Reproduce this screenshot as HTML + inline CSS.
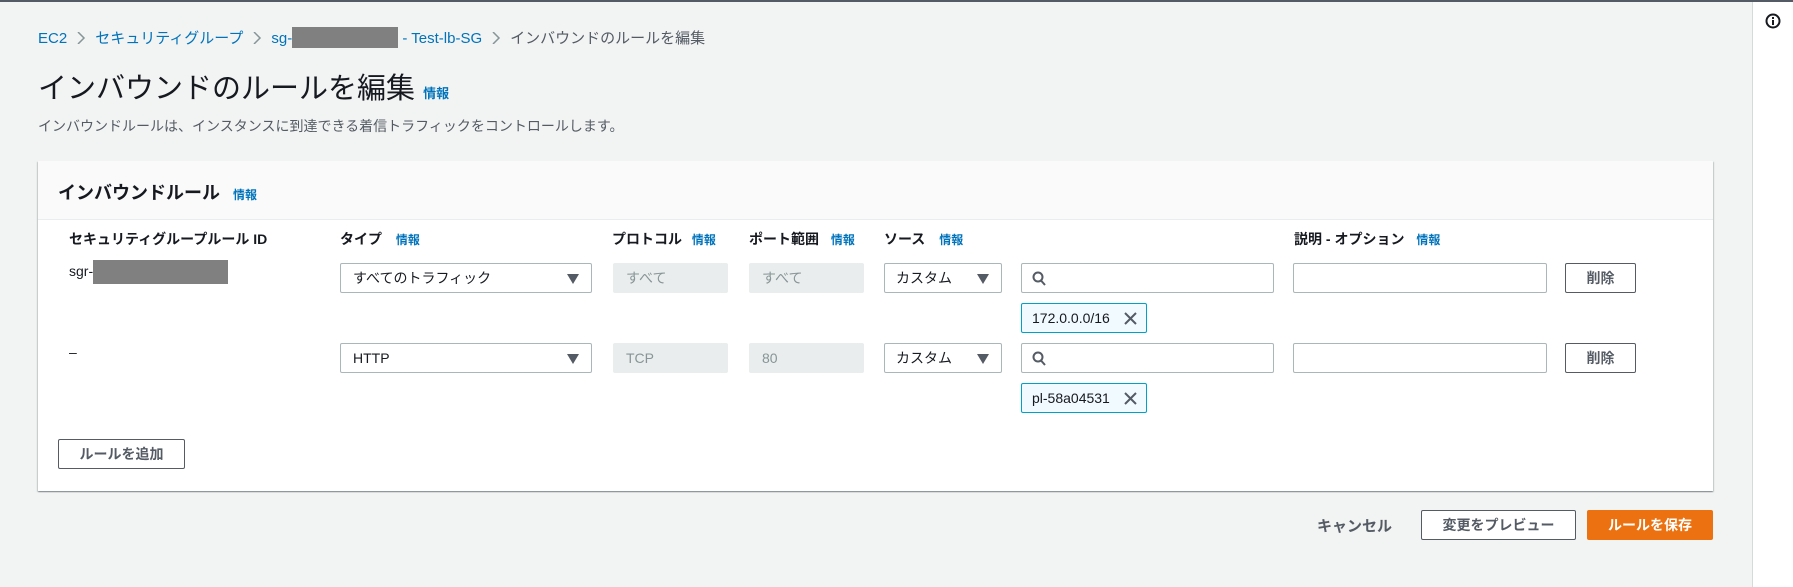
<!DOCTYPE html>
<html><head><meta charset="utf-8"><style>
*{box-sizing:border-box;margin:0;padding:0}
body{width:1793px;height:587px;background:#f2f3f3;font-family:"Liberation Sans","Noto Sans CJK JP",sans-serif;color:#16191f;position:relative;overflow:hidden;font-size:14px}
.a{position:absolute}
.top{left:0;top:0;width:1793px;height:2px;background:#545b64}
.side{left:1752px;top:2px;width:41px;height:585px;background:#fff;border-left:1px solid #d5dbdb}
.lnk{color:#0073bb}
.info{color:#0073bb;font-size:12px;font-weight:bold}
.panel{left:38px;top:161px;width:1675px;height:330px;background:#fff;box-shadow:0 1px 1px rgba(0,28,36,.3),1px 1px 1px rgba(0,28,36,.15),-1px 1px 1px rgba(0,28,36,.15)}
.ph{left:0;top:0;width:1675px;height:59px;background:#fafafa;border-bottom:1px solid #eaeded}
.inp{height:30px;border:1px solid #aab7b8;border-radius:2px;background:#fff;font-size:14px;line-height:28px;padding-left:12px}
.dis{background:#eaeded;border-color:#eaeded;color:#879596}
.hd{font-weight:bold;font-size:14px;top:229px}
.btn{height:30px;border:1px solid #545b64;border-radius:2px;background:#fff;font-weight:bold;font-size:14px;line-height:28px;text-align:center;color:#545b64}
.tag{height:30px;border:1px solid #00a1c9;border-radius:2px;background:#f1faff;font-size:14px;line-height:28px;padding-left:10px}
.arr{position:absolute;right:12px;top:10px;width:0;height:0;border-left:6px solid transparent;border-right:6px solid transparent;border-top:10px solid #545b64}
.red{background:#808080}
.sep{display:inline-block;width:16px;height:12px;margin:0 6px;vertical-align:-1px}
</style></head><body>
<div class="a top"></div>
<div class="a side"><svg class="a" style="left:12px;top:11px" width="16" height="16" viewBox="0 0 16 16"><circle cx="8" cy="8" r="6.5" fill="none" stroke="#16191f" stroke-width="2"/><rect x="7" y="7" width="2" height="5" fill="#16191f"/><rect x="7" y="4" width="2" height="2" fill="#16191f"/></svg></div>

<div class="a" style="left:38px;top:27px;font-size:15px;white-space:nowrap">
<span class="lnk">EC2</span><svg class="sep" viewBox="0 0 16 12"><path d="M5 0L11 6L5 12" fill="none" stroke="#879596" stroke-width="1.5"/></svg><span class="lnk">セキュリティグループ</span><svg class="sep" viewBox="0 0 16 12"><path d="M5 0L11 6L5 12" fill="none" stroke="#879596" stroke-width="1.5"/></svg><span class="lnk">sg-</span><span style="display:inline-block;width:106px;height:21px;background:#808080;vertical-align:-5px"></span><span class="lnk"> - Test-lb-SG</span><svg class="sep" viewBox="0 0 16 12"><path d="M5 0L11 6L5 12" fill="none" stroke="#879596" stroke-width="1.5"/></svg><span style="color:#545b64">インバウンドのルールを編集</span></div>
<div class="a" style="left:38px;top:65px;font-size:29px;white-space:nowrap">インバウンドのルールを編集 <span class="info" style="font-size:13px">情報</span></div>
<div class="a" style="left:38px;top:116px;font-size:14px;color:#545b64">インバウンドルールは、インスタンスに到達できる着信トラフィックをコントロールします。</div>

<div class="a panel"><div class="a ph"></div>
<div class="a" style="left:20px;top:18px;font-size:18px;font-weight:bold;white-space:nowrap">インバウンドルール <span class="info" style="margin-left:8px">情報</span></div>
</div>
<div class="a hd" style="left:69px">セキュリティグループルール ID</div>
<div class="a hd" style="left:340px">タイプ <span class="info" style="margin-left:10px">情報</span></div>
<div class="a hd" style="left:612px">プロトコル <span class="info" style="margin-left:6px">情報</span></div>
<div class="a hd" style="left:749px">ポート範囲 <span class="info" style="margin-left:8px">情報</span></div>
<div class="a hd" style="left:884px">ソース <span class="info" style="margin-left:10px">情報</span></div>
<div class="a hd" style="left:1294px">説明 - オプション <span class="info" style="margin-left:8px">情報</span></div>

<div class="a" style="left:69px;top:263px;font-size:14px">sgr-</div>
<div class="a red" style="left:93px;top:260px;width:135px;height:24px"></div>
<div class="a" style="left:69px;top:344px;font-size:14px">–</div>

<div class="a inp" style="left:340px;top:263px;width:252px">すべてのトラフィック<div class="arr"></div></div>
<div class="a inp dis" style="left:613px;top:263px;width:115px">すべて</div>
<div class="a inp dis" style="left:749px;top:263px;width:115px">すべて</div>
<div class="a inp" style="left:884px;top:263px;width:118px;padding-left:11px">カスタム<div class="arr"></div></div>
<div class="a inp" style="left:1021px;top:263px;width:253px"><svg class="a" style="left:10px;top:7px" width="14" height="15" viewBox="0 0 14 15"><circle cx="6" cy="6" r="4.5" fill="none" stroke="#545b64" stroke-width="2"/><path d="M9 9.5 L13 14" stroke="#545b64" stroke-width="2"/></svg></div>
<div class="a inp" style="left:1293px;top:263px;width:254px"></div>
<div class="a btn" style="left:1565px;top:263px;width:71px">削除</div>
<div class="a tag" style="left:1021px;top:303px;width:126px">172.0.0.0/16<svg class="a" style="right:9px;top:8px" width="13" height="13" viewBox="0 0 13 13"><path d="M1 1L12 12M12 1L1 12" stroke="#545b64" stroke-width="2"/></svg></div>

<div class="a inp" style="left:340px;top:343px;width:252px">HTTP<div class="arr"></div></div>
<div class="a inp dis" style="left:613px;top:343px;width:115px">TCP</div>
<div class="a inp dis" style="left:749px;top:343px;width:115px">80</div>
<div class="a inp" style="left:884px;top:343px;width:118px;padding-left:11px">カスタム<div class="arr"></div></div>
<div class="a inp" style="left:1021px;top:343px;width:253px"><svg class="a" style="left:10px;top:7px" width="14" height="15" viewBox="0 0 14 15"><circle cx="6" cy="6" r="4.5" fill="none" stroke="#545b64" stroke-width="2"/><path d="M9 9.5 L13 14" stroke="#545b64" stroke-width="2"/></svg></div>
<div class="a inp" style="left:1293px;top:343px;width:254px"></div>
<div class="a btn" style="left:1565px;top:343px;width:71px">削除</div>
<div class="a tag" style="left:1021px;top:383px;width:126px">pl-58a04531<svg class="a" style="right:9px;top:8px" width="13" height="13" viewBox="0 0 13 13"><path d="M1 1L12 12M12 1L1 12" stroke="#545b64" stroke-width="2"/></svg></div>

<div class="a btn" style="left:58px;top:439px;width:127px">ルールを追加</div>

<div class="a" style="left:1317px;top:515px;font-size:15px;font-weight:bold;color:#545b64">キャンセル</div>
<div class="a btn" style="left:1421px;top:510px;width:155px;height:30px">変更をプレビュー</div>
<div class="a btn" style="left:1587px;top:510px;width:126px;background:#ec7211;border-color:#ec7211;color:#fff">ルールを保存</div>
</body></html>
